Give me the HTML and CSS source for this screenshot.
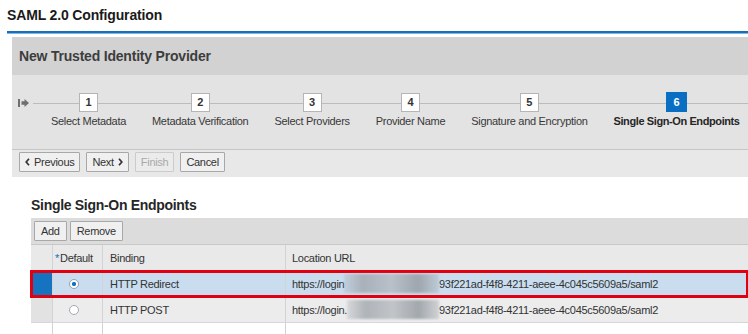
FILE: index.html
```html
<!DOCTYPE html>
<html lang="en">
<head>
  <meta charset="UTF-8" />
  <title>SAML 2.0 Configuration</title>
  <link rel="stylesheet" href="styles.css">
</head>
<body>
  <div class="page-head">
    <h1>SAML 2.0 Configuration</h1>
  </div>

  <div class="wizard">
    <div class="wizard-title">New Trusted Identity Provider</div>
    <div class="wizard-steps">
      <svg class="rail-start" width="11" height="8" viewBox="0 0 11 8">
        <rect x="0" y="0" width="2" height="8" fill="#707070"/>
        <polygon points="3.5,2.3 6.5,2.3 6.5,0 11,4 6.5,8 6.5,5.7 3.5,5.7" fill="#707070"/>
      </svg>
      <ol class="steps">
        <li class="step"><span class="step-num">1</span><span class="step-label">Select Metadata</span></li>
        <li class="step"><span class="step-num">2</span><span class="step-label">Metadata Verification</span></li>
        <li class="step"><span class="step-num">3</span><span class="step-label">Select Providers</span></li>
        <li class="step"><span class="step-num">4</span><span class="step-label">Provider Name</span></li>
        <li class="step"><span class="step-num">5</span><span class="step-label">Signature and Encryption</span></li>
        <li class="step current"><span class="step-num">6</span><span class="step-label">Single Sign-On Endpoints</span></li>
      </ol>
    </div>
    <div class="wizard-actions">
      <button class="btn">
        <svg width="5" height="8" viewBox="0 0 5 8"><polyline points="4,0.8 1.2,4 4,7.2" fill="none" stroke="#333" stroke-width="1.7"/></svg>
        Previous
      </button>
      <button class="btn">
        Next
        <svg width="5" height="8" viewBox="0 0 5 8"><polyline points="1,0.8 3.8,4 1,7.2" fill="none" stroke="#333" stroke-width="1.7"/></svg>
      </button>
      <button class="btn" disabled>Finish</button>
      <button class="btn">Cancel</button>
    </div>
  </div>

  <section class="endpoints">
    <h2>Single Sign-On Endpoints</h2>
    <div class="grid">
      <div class="grid-toolbar">
        <button class="btn">Add</button>
        <button class="btn">Remove</button>
      </div>
      <div class="grid-row grid-head">
        <span class="cell sel"></span>
        <span class="cell col-default"><span class="req">*</span>Default</span>
        <span class="cell">Binding</span>
        <span class="cell">Location URL</span>
      </div>
      <div class="grid-row selected">
        <span class="cell sel"></span>
        <span class="cell col-default"><span class="radio checked"></span></span>
        <span class="cell">HTTP Redirect</span>
        <span class="cell"><span class="url-mask">https://login<span class="redact"></span></span>93f221ad-f4f8-4211-aeee-4c045c5609a5/saml2</span>
      </div>
      <div class="grid-row">
        <span class="cell sel"></span>
        <span class="cell col-default"><span class="radio"></span></span>
        <span class="cell">HTTP POST</span>
        <span class="cell"><span class="url-mask">https://login.<span class="redact"></span></span>93f221ad-f4f8-4211-aeee-4c045c5609a5/saml2</span>
      </div>
      <div class="grid-row empty">
        <span class="cell sel"></span>
        <span class="cell col-default"></span>
        <span class="cell"></span>
        <span class="cell"></span>
      </div>
    </div>
  </section>
</body>
</html>
```

FILE: styles.css
```css
body { margin:0; font-family:"Liberation Sans", Arial, sans-serif; color:#333; background:#fff; }

/* page header */
.page-head { margin-left:7px; border-bottom:2px solid #1b6db5; box-shadow:0 1px 0 #7db8e6; }
.page-head h1 { margin:0; padding:7px 0; font-size:14px; line-height:17px; color:#1a1a1a; letter-spacing:-0.15px; }

/* wizard panel */
.wizard { margin:4px 0 0 12px; }
.wizard-title { height:38px; line-height:38px; padding-left:7px; background:#d2d2d2; font-size:14px; font-weight:bold; color:#3d3d3d; letter-spacing:-0.2px; }
.wizard-steps { display:flex; align-items:flex-start; height:75px; box-sizing:border-box; padding:18px 0 0 6px; background:linear-gradient(#bcbcbc, #bcbcbc) 21px 28px / 100% 1px no-repeat #e3e3e3; border-bottom:1px solid #c6c6c6; }
.rail-start { margin-top:6px; flex:none; }
.steps { display:flex; gap:26px; margin:0 0 0 22px; padding:0; list-style:none; }
.step { display:flex; flex-direction:column; align-items:center; }
.step-num { width:19px; height:19px; box-sizing:border-box; border:1px solid #b5b5b5; background:#fff; font-size:11px; font-weight:bold; line-height:17px; text-align:center; color:#333; }
.step-label { margin-top:3px; font-size:11px; line-height:13px; letter-spacing:-0.3px; color:#383838; white-space:nowrap; }
.step.current .step-num { width:21px; height:20px; margin-top:-1px; background:#0a6fc2; border-color:#0a6fc2; color:#fff; line-height:18px; }
.step.current .step-label { font-weight:bold; letter-spacing:-0.4px; color:#262626; }

.wizard-actions { display:flex; gap:6px; padding:2px 0 5px 7px; background:#e8e8e8; }

/* buttons */
.btn { display:inline-flex; align-items:center; gap:4px; height:20px; padding:0 5px; font:11px "Liberation Sans", Arial, sans-serif; letter-spacing:-0.3px; color:#333; background:#f0f0f0; border:1px solid #a8a8a8; border-radius:1px; }
.btn:disabled { color:#a9a9a9; border-color:#cbcbcb; background:#ebebeb; }

/* endpoints table */
.endpoints { margin:20px 0 0 31px; }
.endpoints h2 { margin:0 0 4px; font-size:14px; line-height:17px; letter-spacing:-0.3px; color:#262626; }
.grid-toolbar { display:flex; gap:3px; height:27px; box-sizing:border-box; padding:3px 0 0 3px; background:#dcdcdc; border-bottom:1px solid #c8c8c8; }
.grid-toolbar .btn { padding:0 6px; }
.grid-row { display:grid; grid-template-columns:22px 50px 183px 1fr; height:26px; box-sizing:border-box; border-bottom:1px solid #d6d6d6; font-size:11px; letter-spacing:-0.3px; color:#333; background:#ececec; }
.cell { display:flex; align-items:center; padding:0 7px; border-right:1px solid #d3d3d3; white-space:nowrap; overflow:hidden; }
.cell:last-child { border-right:none; padding-left:6px; }
.cell.sel { padding:0; background:#e2e2e2; }
.grid-head { background:#e9e9e9; }
.grid-head .sel { background:#e9e9e9; }
.grid-head .col-default { padding-left:2px; }
.req { color:#0a6fc2; margin-right:1px; }
.col-default { padding-left:16px; }

.grid-row.selected { position:relative; z-index:1; background:#c9ddef; outline:3px solid #e1000f; outline-offset:-2px; }
.grid-row.selected .sel { background:#1673bf; }
.grid-row.empty { background:#fff; border-bottom:none; }
.grid-row.empty .sel { background:#fff; }

.radio { width:10px; height:10px; box-sizing:border-box; border:1px solid #a3a9b0; border-radius:50%; background:#fff; }
.radio.checked { border-color:#8fa4b8; background:radial-gradient(circle, #1673bf 0 1.8px, #fff 2.4px); }

.url-mask { display:inline-flex; align-items:center; width:147px; }
.redact { flex:1; height:19px; background:linear-gradient(90deg, rgba(175,180,186,.35), rgba(160,166,172,.8) 20%, rgba(178,183,188,.75) 50%, rgba(150,156,162,.85) 78%, rgba(175,180,186,.45)); filter:blur(1.2px); }
```
